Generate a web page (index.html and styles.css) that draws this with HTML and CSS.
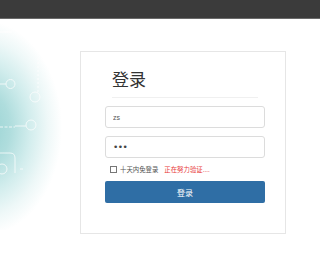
FILE: index.html
```html
<!DOCTYPE html>
<html lang="zh-CN">
<head>
    <meta charset="UTF-8">
    <title>登录</title>
    <link rel="stylesheet" href="styles.css">
</head>
<body>
    <div class="topbar"></div>
    <div class="main">
        <!-- 左侧背景装饰 -->
        <svg class="decor" width="80" height="210" viewBox="0 0 80 210">
            <defs>
                <radialGradient id="glow" cx="0" cy="0" r="1" gradientUnits="userSpaceOnUse"
                                gradientTransform="translate(-18 108) scale(80 108)">
                    <stop offset="0" stop-color="#94d1d1"/>
                    <stop offset="0.35" stop-color="#afdddd"/>
                    <stop offset="0.6" stop-color="#d2eded"/>
                    <stop offset="0.82" stop-color="#eef8f8"/>
                    <stop offset="1" stop-color="#ffffff"/>
                </radialGradient>
            </defs>
            <rect x="0" y="0" width="80" height="210" fill="url(#glow)"/>
            <g fill="none" stroke="#ffffff" stroke-width="1" opacity="0.75">
                <line x1="0" y1="12" x2="12" y2="12" stroke-width="1.5"/>
                <line x1="0" y1="64" x2="6" y2="64"/>
                <circle cx="10.5" cy="64" r="4.5"/>
                <line x1="38" y1="38" x2="38" y2="72" stroke-dasharray="2 2"/>
                <circle cx="35" cy="77" r="5"/>
                <line x1="0" y1="107" x2="15" y2="107" stroke-dasharray="3 1.5" stroke-width="1.2"/>
                <line x1="15" y1="106" x2="26" y2="106"/>
                <circle cx="31" cy="105" r="5"/>
                <path d="M0 133 H10 Q15 133 15 138 V153"/>
                <circle cx="2" cy="149" r="5"/>
                <line x1="20" y1="149" x2="23" y2="149"/>
            </g>
        </svg>

        <div class="login-box">
            <div class="login-title">登录</div>
            <div class="form-row">
                <input type="text" value="zs">
            </div>
            <div class="form-row">
                <input type="password" value="123">
            </div>
            <div class="remember">
                <span class="check"></span>
                <span class="remember-text">十天内免登录</span>
                <span class="status">正在努力验证....</span>
            </div>
            <button class="login-btn">登录</button>
        </div>
    </div>
</body>
</html>
```

FILE: styles.css
```css
body {
    margin: 0;
    font-family: "Noto Sans CJK SC", "Liberation Sans", sans-serif;
    background-color: #fff;
    color: #333;
}
.topbar {
    height: 18px;
    background-color: #3b3b3b;
    border-bottom: 1px solid #6a6a6a;
}
.main {
    position: relative;
    height: 253px;
    padding-top: 32px;
    box-sizing: border-box;
}
.decor {
    position: absolute;
    left: 0;
    top: 1px;
}
.login-box {
    position: relative;
    margin-left: 80px;
    width: 206px;
    height: 183px;
    box-sizing: border-box;
    border: 1px solid #e6e6e6;
    padding: 17px 20px 0 24px;
    background-color: #fff;
}
.login-title {
    margin: 0 7px 8px 7px;
    padding-bottom: 8px;
    border-bottom: 1px solid #f0f0f0;
    font-size: 17px;
    line-height: 20px;
    color: #333;
}
.form-row {
    margin-bottom: 8px;
}
.form-row input {
    display: block;
    width: 160px;
    height: 22px;
    box-sizing: border-box;
    border: 1px solid #dcdcdc;
    border-radius: 3px;
    padding: 0 7px;
    font-family: "Liberation Sans", sans-serif;
    font-size: 7px;
    color: #555;
    outline: none;
}
.form-row input[type="password"] {
    font-family: "DejaVu Sans", sans-serif;
    font-size: 9px;
    letter-spacing: -0.5px;
    color: #444;
}
.remember {
    display: flex;
    align-items: center;
    height: 23px;
    margin-top: -8px;
    padding-left: 5px;
    font-size: 6.4px;
}
.remember .check {
    width: 5px;
    height: 5px;
    border: 1px solid #777;
    margin-right: 3px;
}
.remember-text {
    color: #555;
    margin-right: 6px;
}
.status {
    color: #e83a3a;
}
.login-btn {
    display: block;
    width: 160px;
    height: 22px;
    border: none;
    border-radius: 2px;
    background-color: #2f6ea5;
    color: #fff;
    font-family: "Noto Sans CJK SC", sans-serif;
    font-size: 8px;
    padding: 0;
}
```
